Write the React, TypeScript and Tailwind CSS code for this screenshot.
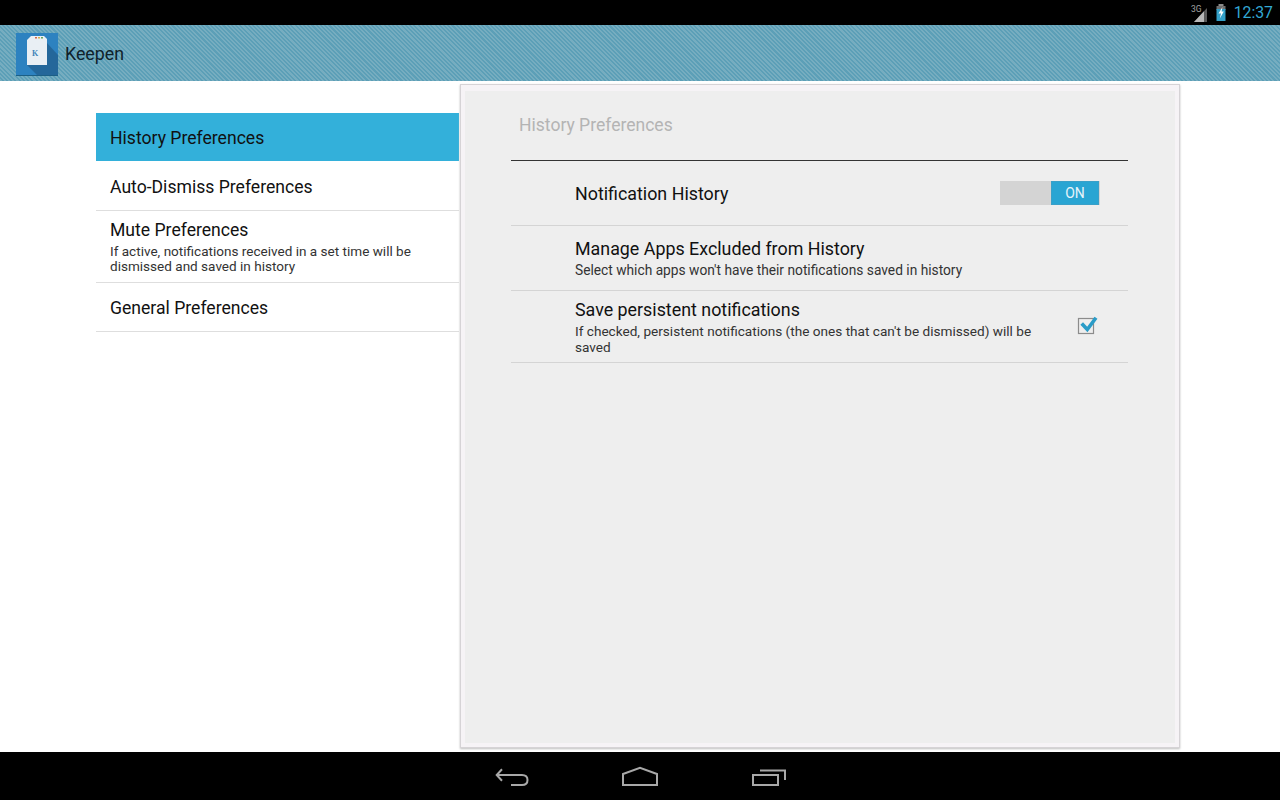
import React from 'react';

const font = "font-['Roboto',sans-serif]";

const NavItem = ({ title, sub, active, h }: { title: string; sub?: string; active?: boolean; h: string }) => (
  <div
    className={`flex flex-col justify-center pl-[14px] pr-[40px] ${h} ${sub ? 'pb-[2px]' : 'pt-[2px]'} ${
      active ? 'bg-[#33b0da]' : 'border-b border-[#dedede]'
    }`}
  >
    <div className={`text-[17.6px] leading-[24px] text-[#111] ${sub ? 'mb-[2px]' : ''}`}>{title}</div>
    {sub && <div className="text-[13.55px] leading-[15px] text-[#333]">{sub}</div>}
  </div>
);

const PrefRow = ({
  title,
  sub,
  h,
  tight,
  children,
}: {
  title: string;
  sub?: string;
  h: string;
  tight?: boolean;
  children?: React.ReactNode;
}) => (
  <div className={`flex items-center border-b border-[#d4d4d4] pl-[64px] pr-[28px] ${h}`}>
    <div className={`flex-1 pr-[36px] ${sub ? '' : 'pt-[2px]'}`}>
      <div className={`text-[17.85px] leading-[22px] text-[#111] ${sub ? 'mb-[2px]' : ''}`}>{title}</div>
      {sub && <div className={`leading-[16px] text-[#333] ${tight ? 'text-[13.6px]' : 'text-[13.75px]'}`}>{sub}</div>}
    </div>
    {children}
  </div>
);

export default function App() {
  return (
    <div className={`flex h-[800px] w-[1280px] flex-col overflow-hidden bg-white ${font}`}>
      {/* status bar */}
      <div className="flex h-[25px] items-center justify-end bg-black pr-[7px]">
        <svg width="17" height="20" viewBox="0 0 17 20" className="mr-[8px]">
          <text x="0" y="9" fontSize="8.5" fill="#a0a0a0" fontFamily="Roboto">3G</text>
          <path d="M3 19 L16 5 V19 Z" fill="#5a5a5a" />
          <path d="M3 19 L13 8.2 V19 Z" fill="#b8b8b8" />
        </svg>
        <svg width="10" height="17" viewBox="0 0 10 17" className="mr-[8px]">
          <rect x="2.5" y="0" width="5" height="2" fill="#8a8a8a" />
          <rect x="0.5" y="2" width="9" height="4" fill="#6f6f6f" />
          <rect x="0.5" y="5" width="9" height="12" fill="#33a0c8" />
          <path d="M6.5 3 L2.5 9.5 H5 L3.8 14.5 L7.8 7.5 H5.6 Z" fill="#fff" />
        </svg>
        <span className="text-[15.8px] leading-[25px] text-[#33a8d4]">12:37</span>
      </div>

      {/* action bar */}
      <div className="flex h-[56px] items-center bg-[repeating-linear-gradient(45deg,#76adc0_0px,#76adc0_1.5px,#5c9fb7_1.5px,#5c9fb7_3px)] pl-[16px]">
        <svg width="42" height="42" viewBox="0 0 42 42" className="mt-[1px] shadow-[0_1px_0_#1c5f85]">
          <rect width="42" height="42" fill="#2d82c0" />
          <path d="M11 32 L31 10 L42 22 V42 H21 Z" fill="#24679a" />
          <path d="M15 3 H28 L31 6 V32 H11 V7 Z" fill="#e9eff4" />
          <rect x="19" y="4" width="2" height="1.5" fill="#d0694f" />
          <rect x="22" y="4" width="2" height="1.5" fill="#d8b04e" />
          <rect x="25" y="4" width="2" height="1.5" fill="#6aa65a" />
          <text x="16" y="23" fontSize="8" fontWeight="700" fill="#3f83b8" fontFamily="Liberation Serif">K</text>
        </svg>
        <span className="ml-[7px] mt-[2px] text-[17.8px] text-[#10222b]">Keepen</span>
      </div>

      {/* content */}
      <div className="flex h-[671px]">
        <div className="ml-[96px] mt-[32px] w-[363px]">
          <NavItem title="History Preferences" active h="h-[48px]" />
          <NavItem title="Auto-Dismiss Preferences" h="h-[50px]" />
          <NavItem
            title="Mute Preferences"
            sub="If active, notifications received in a set time will be dismissed and saved in history"
            h="h-[72px]"
          />
          <NavItem title="General Preferences" h="h-[49px]" />
        </div>

        <div className="ml-[1px] mt-[3px] mb-[4px] flex w-[720px] border border-[#d6d3d6] bg-[#f6f3f6] pt-[6px] pr-[4px] pb-[4px] pl-[4px] shadow-[0_1px_2px_#bdbdbd]">
          <div className="flex-1 bg-[#eeeeee] pl-[46px] pr-[47px]">
            <div className="flex h-[70px] items-center border-b border-[#333] pl-[8px] pb-[1px] text-[17.55px] text-[#b4b4b4]">
              <span>History Preferences</span>
            </div>
            <PrefRow title="Notification History" h="h-[65px]">
              <div className="flex h-[24px] w-[100px] bg-[#d4d4d4]">
                <div className="ml-[51px] flex w-[48px] items-center justify-center border border-[#3aa0c8] bg-[#29a5d3] text-[14px] text-[#e6f4fa]">
                  ON
                </div>
              </div>
            </PrefRow>
            <PrefRow
              title="Manage Apps Excluded from History"
              sub="Select which apps won't have their notifications saved in history"
              h="h-[65px]"
            />
            <PrefRow
              title="Save persistent notifications"
              sub="If checked, persistent notifications (the ones that can't be dismissed) will be saved"
              h="h-[72px]"
              tight
            >
              <svg width="22" height="22" viewBox="0 0 22 22" className="mr-[1px] -mt-[4px]">
                <rect x="1.5" y="4.5" width="15" height="15" fill="none" stroke="#8c8c8c" strokeWidth="1.2" />
                <path d="M4.7 9.5 L10.3 15.5 L19 3.8" fill="none" stroke="#2a9cc8" strokeWidth="3.6" />
              </svg>
            </PrefRow>
          </div>
        </div>
      </div>

      {/* nav bar */}
      <div className="flex h-[48px] items-center justify-center bg-black">
        <svg width="320" height="48" viewBox="0 0 320 48" fill="none" stroke="#a8a8a8" strokeWidth="2">
          <path d="M17 23 H42 Q47.5 23 47.5 28 Q47.5 33 42 33 H31" />
          <path d="M22 17.3 L16.7 23 L22 28.7" />
          <path d="M143 33 V22 L160 15.7 L177 22 V33 Z" />
          <rect x="273" y="23" width="25" height="10" />
          <path d="M280 18.5 H305 V28" />
        </svg>
      </div>
    </div>
  );
}
